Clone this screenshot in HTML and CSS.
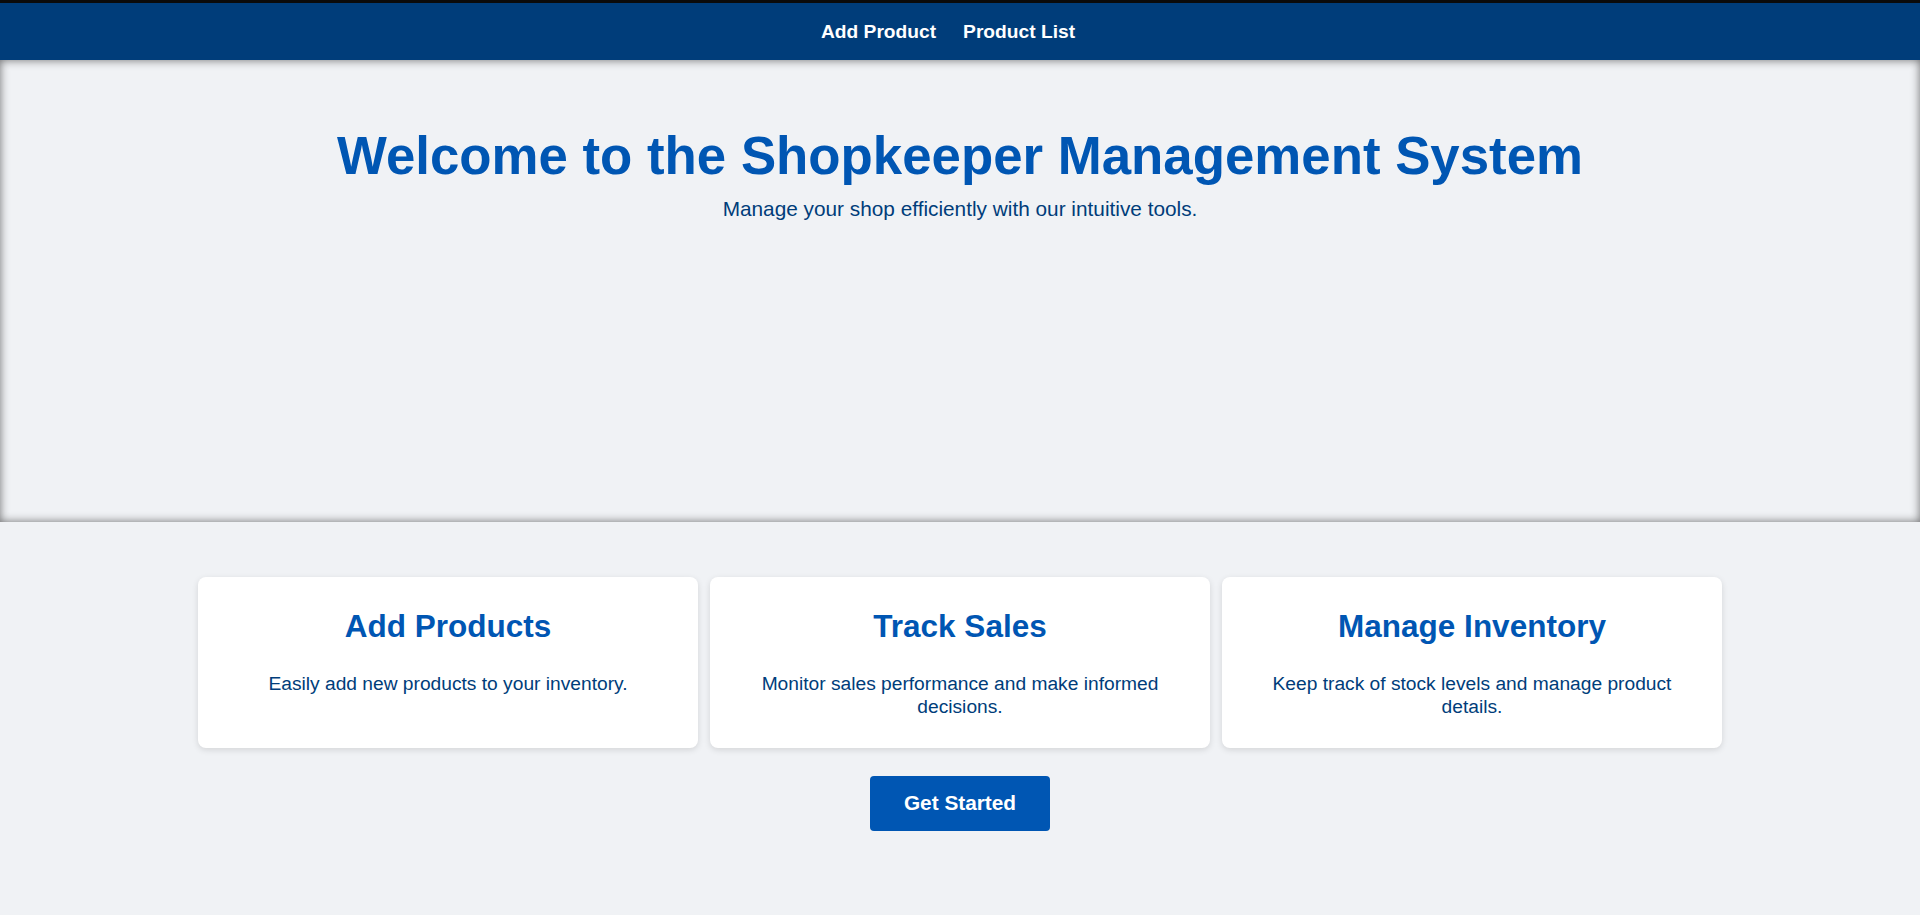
FILE: index.html
```html
<!DOCTYPE html>
<html lang="en">
<head>
<meta charset="utf-8">
<title>Shopkeeper Management System</title>
<link rel="stylesheet" href="styles.css">
</head>
<body>
<header class="topbar">
  <nav class="nav">
    <a class="nav-link" href="#">Add Product</a>
    <a class="nav-link" href="#">Product List</a>
  </nav>
</header>
<section class="hero">
  <h1 class="hero-title">Welcome to the Shopkeeper Management System</h1>
  <p class="hero-sub">Manage your shop efficiently with our intuitive tools.</p>
</section>
<main class="features">
  <div class="cards">
    <div class="card">
      <h2 class="card-title">Add Products</h2>
      <p class="card-text">Easily add new products to your inventory.</p>
    </div>
    <div class="card">
      <h2 class="card-title">Track Sales</h2>
      <p class="card-text">Monitor sales performance and make informed decisions.</p>
    </div>
    <div class="card">
      <h2 class="card-title">Manage Inventory</h2>
      <p class="card-text">Keep track of stock levels and manage product details.</p>
    </div>
  </div>
  <button class="cta">Get Started</button>
</main>
</body>
</html>
```
FILE: styles.css
```css
html, body {
  margin: 0;
  padding: 0;
}
body {
  font-family: "Liberation Sans", Arial, sans-serif;
  background: #f0f2f5;
  color: #003d7a;
  min-height: 915px;
}
.topbar {
  background: #003d7a;
  border-top: 3px solid #0b0b0b;
  height: 57px;
  display: flex;
  align-items: center;
  justify-content: center;
}
.nav {
  display: flex;
  gap: 27px;
  padding-right: 24px;
}
.nav-link {
  color: #ffffff;
  font-weight: bold;
  font-size: 19.2px;
  text-decoration: none;
}
.hero {
  height: 462px;
  box-sizing: border-box;
  padding-top: 64.5px;
  text-align: center;
  background: #f0f2f5;
  box-shadow: inset 0 0 10px rgba(0, 0, 0, 0.55);
}
.hero-title {
  margin: 0;
  font-size: 52.8px;
  font-weight: bold;
  color: #0056b3;
}
.hero-sub {
  margin: 11.5px 0 0;
  font-size: 20.8px;
  color: #003d7a;
}
.features {
  display: flex;
  flex-direction: column;
  align-items: center;
  padding-top: 55px;
}
.cards {
  display: grid;
  grid-template-columns: repeat(3, 500px);
  gap: 12px;
}
.card {
  background: #ffffff;
  border-radius: 8px;
  box-shadow: 0 2px 6px rgba(0, 0, 0, 0.12);
  padding: 31px 30px 30px;
  text-align: center;
}
.card-title {
  margin: 0 0 26.5px;
  font-size: 31.5px;
  font-weight: bold;
  color: #0056b3;
}
.card-text {
  margin: 0;
  font-size: 19.2px;
  line-height: 23px;
  color: #003d7a;
}
.cta {
  margin-top: 28px;
  background: #0056b3;
  color: #ffffff;
  border: none;
  border-radius: 4px;
  padding: 15px 34px 16px;
  font-family: "Liberation Sans", Arial, sans-serif;
  font-size: 20.8px;
  font-weight: bold;
  line-height: 24px;
}
```
